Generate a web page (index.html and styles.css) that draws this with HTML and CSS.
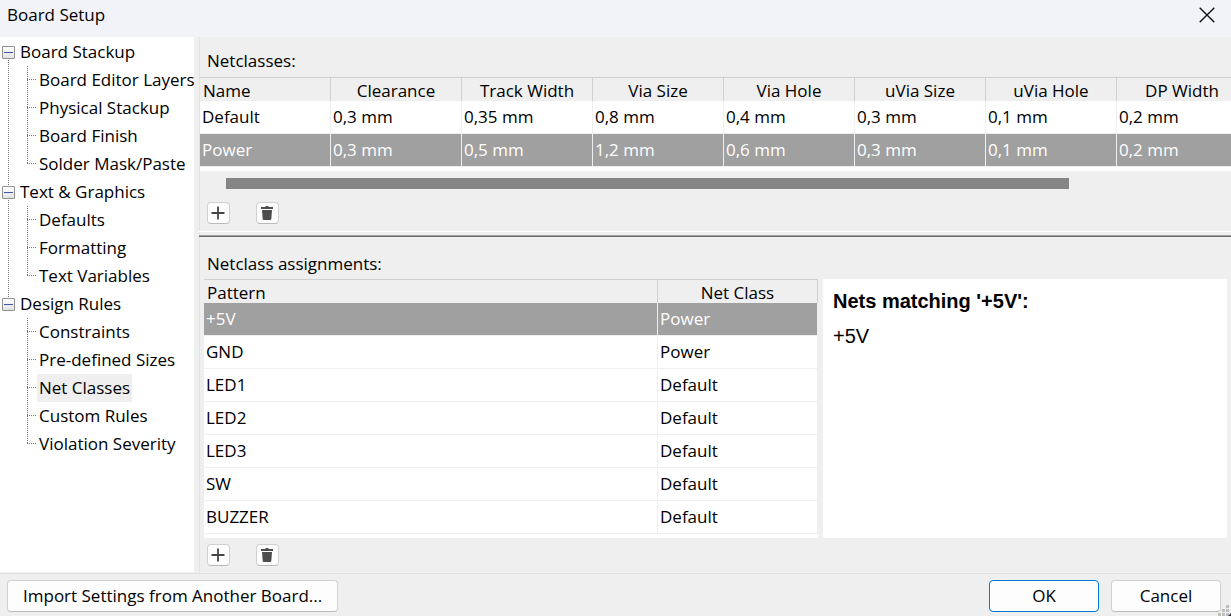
FILE: index.html
```html
<!DOCTYPE html>
<html lang="en">
<head>
  <title>Board Setup</title>
  <meta charset="UTF-8">
  <link rel="stylesheet" href="styles.css">
</head>
<body>
  <header class="titlebar">
    <h1>Board Setup</h1>
    <button class="close" aria-label="Close">
      <svg width="16" height="16" viewBox="0 0 16 16"><path d="M.7.7l14.6 14.6M15.3.7L.7 15.3" stroke="#111" stroke-width="1.4" fill="none"/></svg>
    </button>
  </header>

  <div class="main">
    <!-- Settings tree -->
    <nav class="sidebar">
      <ul class="tree">
        <li class="group">
          <div class="group-row"><button class="toggle" aria-label="Collapse"></button><a href="#">Board Stackup</a></div>
          <ul class="pages">
            <li><a href="#">Board Editor Layers</a></li>
            <li><a href="#">Physical Stackup</a></li>
            <li><a href="#">Board Finish</a></li>
            <li><a href="#">Solder Mask/Paste</a></li>
          </ul>
        </li>
        <li class="group">
          <div class="group-row"><button class="toggle" aria-label="Collapse"></button><a href="#">Text &amp; Graphics</a></div>
          <ul class="pages">
            <li><a href="#">Defaults</a></li>
            <li><a href="#">Formatting</a></li>
            <li><a href="#">Text Variables</a></li>
          </ul>
        </li>
        <li class="group">
          <div class="group-row"><button class="toggle" aria-label="Collapse"></button><a href="#">Design Rules</a></div>
          <ul class="pages">
            <li><a href="#">Constraints</a></li>
            <li><a href="#">Pre-defined Sizes</a></li>
            <li><a href="#" class="current">Net Classes</a></li>
            <li><a href="#">Custom Rules</a></li>
            <li><a href="#">Violation Severity</a></li>
          </ul>
        </li>
      </ul>
    </nav>

    <main class="content">
      <!-- Netclasses -->
      <section class="netclasses">
        <h2>Netclasses:</h2>
        <div class="grid-scroll">
          <table class="grid netclass-grid">
            <thead>
              <tr><th>Name</th><th>Clearance</th><th>Track Width</th><th>Via Size</th><th>Via Hole</th><th>uVia Size</th><th>uVia Hole</th><th>DP Width</th></tr>
            </thead>
            <tbody>
              <tr><td>Default</td><td>0,3 mm</td><td>0,35 mm</td><td>0,8 mm</td><td>0,4 mm</td><td>0,3 mm</td><td>0,1 mm</td><td>0,2 mm</td></tr>
              <tr class="selected"><td>Power</td><td>0,3 mm</td><td>0,5 mm</td><td>1,2 mm</td><td>0,6 mm</td><td>0,3 mm</td><td>0,1 mm</td><td>0,2 mm</td></tr>
            </tbody>
          </table>
        </div>
        <div class="scrollbar"><div class="thumb"></div></div>
        <div class="tools">
          <button class="tool" aria-label="Add net class">
            <svg width="15" height="15" viewBox="0 0 15 15"><path d="M7 .5v13M.5 7h13" stroke="#454545" stroke-width="1.8" fill="none"/></svg>
          </button>
          <button class="tool" aria-label="Delete net class">
            <svg width="15" height="15" viewBox="0 0 15 15"><path d="M1 1h4l1-1h2l1 1h4v2H1zM2 4h10l-.7 9q-.1 1-1 1H3.700q-.9 0-1-1z" fill="#4d4d4d"/></svg>
          </button>
        </div>
      </section>

      <div class="splitter"></div>

      <!-- Netclass assignments -->
      <section class="assignments">
        <h2>Netclass assignments:</h2>
        <div class="columns">
          <div class="grid-box">
            <table class="grid assignment-grid">
              <thead>
                <tr><th>Pattern</th><th class="netclass-col">Net Class</th></tr>
              </thead>
              <tbody>
                <tr class="selected"><td>+5V</td><td>Power</td></tr>
                <tr><td>GND</td><td>Power</td></tr>
                <tr><td>LED1</td><td>Default</td></tr>
                <tr><td>LED2</td><td>Default</td></tr>
                <tr><td>LED3</td><td>Default</td></tr>
                <tr><td>SW</td><td>Default</td></tr>
                <tr><td>BUZZER</td><td>Default</td></tr>
              </tbody>
            </table>
          </div>
          <div class="matches">
            <h3>Nets matching '+5V':</h3>
            <p>+5V</p>
          </div>
        </div>
        <div class="tools">
          <button class="tool" aria-label="Add assignment">
            <svg width="15" height="15" viewBox="0 0 15 15"><path d="M7 .5v13M.5 7h13" stroke="#454545" stroke-width="1.8" fill="none"/></svg>
          </button>
          <button class="tool" aria-label="Delete assignment">
            <svg width="15" height="15" viewBox="0 0 15 15"><path d="M1 1h4l1-1h2l1 1h4v2H1zM2 4h10l-.7 9q-.1 1-1 1H3.700q-.9 0-1-1z" fill="#4d4d4d"/></svg>
          </button>
        </div>
      </section>
    </main>
  </div>

  <footer class="footer">
    <button class="btn import">Import Settings from Another Board...</button>
    <button class="btn ok">OK</button>
    <button class="btn">Cancel</button>
    <svg class="grip" width="13" height="11" viewBox="0 0 13 11"><path d="M8 0h3v3H8zM4 4h3v3H4zM8 4h3v3H8zM0 8h3v3H0zM4 8h3v3H4zM8 8h3v3H8z" fill="#bfbfbf"/><path d="M13 8v3h-3z" fill="#2b3440"/></svg>
  </footer>
</body>
</html>
```
FILE: styles.css
```css
* {
  box-sizing: border-box;
}

body {
  margin: 0;
  min-height: 100vh;
  display: flex;
  flex-direction: column;
  background-color: #efefef;
  color: #000;
  font-family: 'Segoe UI', 'Open Sans', 'Noto Sans', sans-serif;
  font-size: 17px;
  line-height: 24px;
}

h1, h2, h3, p, ul {
  margin: 0;
  padding: 0;
  font-size: inherit;
  font-weight: 400;
}

ul {
  list-style: none;
}

a {
  color: inherit;
  text-decoration: none;
}

button {
  padding: 0;
  font: inherit;
  color: inherit;
}

/* Title bar */
.titlebar {
  display: flex;
  justify-content: space-between;
  align-items: center;
  height: 37px;
  padding: 0 16px 8px 7px;
  background-color: #f1f3f9;
}

.close {
  display: flex;
  border: none;
  background: none;
}

.main {
  flex: 1;
  display: flex;
}

/* Tree */
.sidebar {
  flex: none;
  width: 194px;
  margin-bottom: 1px;
  padding-top: 1px;
  background-color: #fff;
  white-space: nowrap;
}

.group {
  background: repeating-linear-gradient(#777 0 1px, transparent 1px 2px) 8px 0 / 1px 100% no-repeat;
}

.group:first-child {
  background-position: 8px 14px;
}

.group:last-child {
  background-size: 1px 14px;
}

.group-row {
  display: flex;
  align-items: center;
  gap: 5px;
  height: 28px;
  padding-left: 2px;
}

.toggle {
  display: flex;
  align-items: center;
  justify-content: center;
  width: 13px;
  height: 13px;
  border: 1px solid #919191;
  border-radius: 1px;
  background: linear-gradient(#fff, #e2e2e2);
}

.toggle::before {
  content: "";
  width: 9px;
  height: 1px;
  background-color: #3f55a5;
}

.pages {
  margin-left: 27px;
}

.pages li {
  display: flex;
  height: 28px;
  padding-left: 10px;
  background:
    repeating-linear-gradient(#777 0 1px, transparent 1px 2px) 0 0 / 1px 100% no-repeat,
    repeating-linear-gradient(90deg, #777 0 1px, transparent 1px 2px) 0 13px / 9px 1px no-repeat;
}

.pages li:last-child {
  background-size: 1px 14px, 9px 1px;
}

.pages a {
  padding: 0 2px;
  line-height: 28px;
}

.pages .current {
  background-color: #efefef;
}

/* Right side */
.content {
  flex: 1;
  min-width: 0;
  display: flex;
  flex-direction: column;
  margin-left: 5px;
  border-left: 1px solid #e3e3e3;
}

.content h2 {
  padding: 12px 7px 4px;
}

.grid-scroll {
  overflow: hidden;
  padding-bottom: 4px;
  background-color: #fff;
}

.grid {
  table-layout: fixed;
  border-collapse: separate;
  border-spacing: 0;
  background-color: #fff;
}

.grid th {
  height: 24px;
  padding: 2px 0 0;
  border-top: 1px solid #d0d0d0;
  border-right: 1px solid #d0d0d0;
  background-color: #efefef;
  font-weight: 400;
  line-height: 21px;
}

.grid th:first-child {
  padding-left: 3px;
  text-align: left;
}

.grid td {
  height: 33px;
  padding: 0 2px;
  border-right: 1px solid #efefef;
  border-bottom: 1px solid #efefef;
  line-height: 32px;
}

.grid .selected td {
  background-color: #a0a0a0;
  color: #fff;
}

.netclass-grid {
  width: 1048px;
}

.scrollbar {
  padding: 7px 162px 7px 26px;
}

.thumb {
  height: 11px;
  background-color: #858585;
}

.tools {
  display: flex;
  gap: 26px;
  padding: 6px 7px 7px;
}

.tool {
  display: flex;
  align-items: center;
  justify-content: center;
  width: 23px;
  height: 22px;
  border: 1px solid #d0d0d0;
  border-bottom-color: #bababa;
  border-radius: 4px;
  background-color: #fdfdfd;
}

.splitter {
  height: 6px;
  margin-left: -1px;
  border-top: 1px solid #fff;
  border-bottom: 1px solid #696969;
  box-shadow: inset 0 -1px #a0a0a0;
}

.assignments h2 {
  padding-top: 15px;
  padding-bottom: 3px;
}

.columns {
  display: grid;
  grid-template-columns: 614fr 404fr;
  gap: 5px;
  padding: 0 4px;
}

.grid-box {
  padding-bottom: 4px;
  background-color: #fff;
}

.assignment-grid {
  width: 100%;
}

.netclass-col {
  width: 160px;
}

.matches {
  padding: 10px;
  background-color: #fff;
  font-family: Arial, 'Liberation Sans', sans-serif;
  font-size: 20px;
}

.matches h3 {
  margin-bottom: 11px;
  font-weight: 700;
}

/* Footer */
.footer {
  position: relative;
  display: flex;
  gap: 12px;
  padding: 6px 10px 4px 7px;
  border-top: 1px solid #e0e0e0;
}

.btn {
  width: 110px;
  height: 32px;
  border: 1px solid #d0d0d0;
  border-bottom-color: #bababa;
  border-radius: 4px;
  background-color: #fdfdfd;
}

.import {
  width: auto;
  margin-right: auto;
  padding: 0 15px;
}

.ok {
  border-color: #0078d4;
}

.grip {
  position: absolute;
  right: 0;
  bottom: 0;
}
```
